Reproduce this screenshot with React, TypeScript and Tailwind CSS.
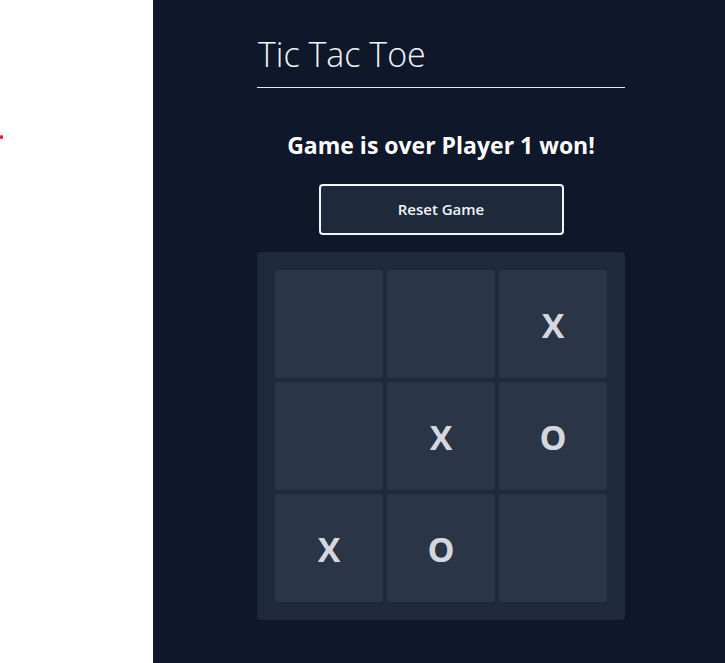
import React from "react";

const board: string[] = ["", "", "X", "", "X", "O", "X", "O", ""];

export default function App() {
  return (
    <div className="flex min-h-[663px] w-full" style={{ fontFamily: '"Open Sans", "Noto Sans", sans-serif' }}>
      <div className="relative w-[153px] shrink-0 bg-white">
        <div className="absolute left-0 top-[135px] h-[4px] w-[3px] rounded-full bg-[#e5141f]" />
      </div>
      <div className="flex-1 bg-[#0f172a]">
        <div className="ml-[104px] w-[368px] pt-[31px]">
          <h1 className="border-b border-[#e5e7eb] pb-[10px] pl-[1px] text-[34px] font-light leading-[46px] text-[#f1f5f9]">
            Tic Tac Toe
          </h1>
          <h2 className="mt-[42px] text-center text-[23px] font-bold leading-[30px] text-white">
            Game is over Player 1 won!
          </h2>
          <div className="mt-[24px] flex justify-center">
            <button className="h-[51px] w-[245px] rounded-[4px] border-2 border-[#f1f5f9] bg-[#1e293b] text-[15px] font-semibold text-[#f1f5f9]">
              Reset Game
            </button>
          </div>
          <div className="mt-[17px] grid grid-cols-3 gap-[4px] rounded-[4px] bg-[#1e293b] p-[18px]">
            {board.map((v, i) => (
              <div
                key={i}
                className="flex h-[108px] items-center justify-center rounded-[3px] bg-[#2a3548] pt-[3px] text-[34px] font-bold text-[#d4d8de]"
              >
                {v}
              </div>
            ))}
          </div>
        </div>
      </div>
    </div>
  );
}
